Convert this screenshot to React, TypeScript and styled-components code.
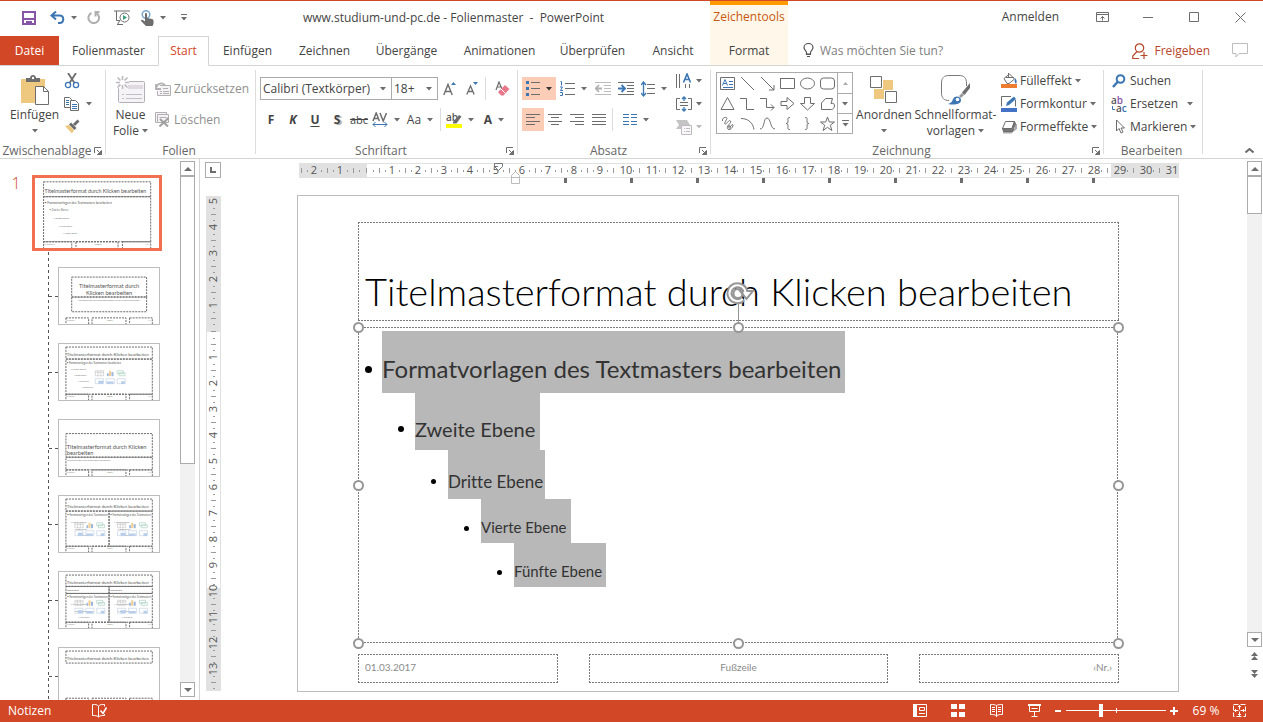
import React from 'react';
import styled, { createGlobalStyle, css } from 'styled-components';

const c = {
  brand: '#d24726',
  text: '#444444',
  muted: '#666666',
  line: '#d4d4d4',
  edge: '#ababab',
  blue: '#3b76b3',
  sand: '#edc87e',
  pick: '#fbcdb6',
  icon: '#6d6d6d',
};

const Global = createGlobalStyle`
  * { box-sizing: border-box; }
  body { margin: 0; background: #fff; overflow: hidden; }
  body, button, input, select { font: 12px/16px "Open Sans", "Noto Sans", sans-serif; color: ${c.text}; }
  button { background: none; border: 0; padding: 0; }
  svg { display: block; flex: none; }
`;

const Shell = styled.div`
  display: flex;
  flex-direction: column;
  height: 100vh;
  border-top: 1px solid ${c.brand};
`;

/* ---------- header ---------- */
const Header = styled.header`
  display: grid;
  grid-template-columns: 710px 78px 1fr;
  grid-template-rows: 35px 30px;
`;
const QuickRow = styled.div`
  display: flex;
  align-items: center;
  padding: 0 0 2px 10px;
`;
const Quick = styled.button<{ $w: number }>`
  display: flex;
  align-items: center;
  justify-content: center;
  gap: 6px;
  width: ${p => p.$w}px;
  height: 28px;
`;
const Title = styled.h1`
  flex: 1;
  margin: 0;
  font: inherit;
  text-align: center;
`;
const Context = styled.div`
  grid-row: 1 / span 2;
  grid-column: 2;
  display: flex;
  flex-direction: column;
  background: #fff7ea;
  border-top: 4px solid #ff9a00;
  border-bottom: 1px solid ${c.line};
`;
const ContextName = styled.div`
  height: 31px;
  padding-top: 4px;
  text-align: center;
  color: #c8590f;
`;
const FormatTab = styled.button`
  flex: 1;
`;
const WindowRow = styled.div`
  display: flex;
  align-items: center;
  justify-content: flex-end;
  padding-bottom: 3px;
`;
const SignIn = styled.button`
  margin-right: 20px;
`;
const WinButton = styled.button`
  display: flex;
  align-items: center;
  justify-content: center;
  width: 46px;
  height: 30px;
`;
const Tabs = styled.nav`
  grid-row: 2;
  grid-column: 1;
  display: flex;
`;
const Tab = styled.button<{ $w: number; $kind?: 'file' | 'active' }>`
  width: ${p => p.$w}px;
  border-bottom: 1px solid ${c.line};
  ${p => p.$kind === 'file' && css`background: ${c.brand}; color: #fff;`}
  ${p => p.$kind === 'active' && css`
    color: ${c.brand};
    border: 1px solid ${c.line};
    border-bottom-color: #fff;
  `}
`;
const TellRow = styled.div`
  grid-row: 2;
  grid-column: 3;
  display: flex;
  align-items: center;
  padding: 0 15px;
  border-bottom: 1px solid ${c.line};
`;
const Tell = styled.label`
  display: flex;
  align-items: center;
  flex: 1;
  gap: 6px;
`;
const TellInput = styled.input`
  flex: 1;
  min-width: 0;
  border: 0;
  padding: 0;
  outline: 0;
  &::placeholder { color: #808080; opacity: 1; }
`;
const Share = styled.button`
  display: flex;
  align-items: center;
  gap: 6px;
  margin-right: 22px;
  color: #b7472a;
`;

/* ---------- ribbon ---------- */
const Ribbon = styled.section`
  display: flex;
  height: 93px;
  flex: none;
  padding-top: 3px;
  border-bottom: 1px solid ${c.line};
`;
const Group = styled.div<{ $w: number }>`
  display: flex;
  flex-direction: column;
  width: ${p => p.$w}px;
`;
const GroupBody = styled.div<{ $pad?: number }>`
  display: flex;
  height: 73px;
  padding-left: ${p => p.$pad ?? 0}px;
`;
const GroupName = styled.div`
  display: flex;
  align-items: center;
  padding: 1px 3px 0 0;
  height: 16px;
  color: ${c.muted};
  > span { flex: 1; text-align: center; white-space: nowrap; }
`;
const Divider = styled.div`
  width: 1px;
  margin: 1px 0 4px;
  background: #dcdcdc;
`;
const Big = styled.button<{ $w: number }>`
  display: flex;
  flex-direction: column;
  align-items: center;
  width: ${p => p.$w}px;
  padding-top: 4px;
  white-space: nowrap;
`;
const BigIcon = styled.span`
  display: flex;
  align-items: center;
  justify-content: center;
  height: 34px;
`;
const Line = styled.span`
  display: flex;
  align-items: center;
  justify-content: center;
  gap: 3px;
  height: 16px;
`;
const Stack = styled.div<{ $pad?: number; $top?: number }>`
  display: flex;
  flex-direction: column;
  align-items: flex-start;
  padding-left: ${p => p.$pad ?? 0}px;
  padding-top: ${p => p.$top ?? 0}px;
`;
const Small = styled.button<{ $h?: number; $gap?: number; $off?: boolean }>`
  display: flex;
  align-items: center;
  gap: ${p => p.$gap ?? 3}px;
  height: ${p => p.$h ?? 23}px;
  white-space: nowrap;
  ${p => p.$off && css`color: #8f8f8f;`}
`;
const Rows = styled.div`
  display: flex;
  flex-direction: column;
  gap: 8px;
  padding-top: 8px;
`;
const Row = styled.div`
  display: flex;
  height: 23px;
`;
const Tool = styled.button<{ $w: number; $on?: boolean }>`
  display: flex;
  align-items: center;
  justify-content: center;
  gap: 6px;
  width: ${p => p.$w}px;
  background: ${p => (p.$on ? c.pick : 'transparent')};
`;
const Glyph = styled.span<{ $kind?: 'b' | 'i' | 'u' | 's' | 'x' }>`
  ${p => p.$kind && p.$kind !== 'x' && css`font-weight: 700;`}
  ${p => p.$kind === 'i' && css`font-style: italic;`}
  ${p => p.$kind === 'u' && css`text-decoration: underline; text-underline-offset: 2px;`}
  ${p => p.$kind === 's' && css`text-shadow: 2px 1px 1px #aaa;`}
  ${p => p.$kind === 'x' && css`font-size: 11px; text-decoration: line-through;`}
`;
const Rule = styled.span`
  width: 1px;
  margin: 0 2px;
  background: #dcdcdc;
`;
const Combo = styled.div<{ $w: number }>`
  position: relative;
  width: ${p => p.$w}px;
  height: 23px;
  margin-right: -1px;
  border: 1px solid ${c.edge};
  > svg { position: absolute; right: 5px; top: 9px; pointer-events: none; }
`;
const Select = styled.select`
  appearance: none;
  width: 100%;
  height: 21px;
  padding: 0 2px;
  border: 0;
  background: #fff;
`;
const Gallery = styled.div`
  display: grid;
  grid-template-columns: repeat(6, 20px) 15px;
  grid-template-rows: repeat(3, 20px);
  height: 62px;
  margin: 3px 3px 0 0;
  border: 1px solid ${c.edge};
`;
const Cell = styled.button`
  display: flex;
  align-items: center;
  justify-content: center;
`;
const GalleryStep = styled(Cell)<{ $n: number }>`
  grid-column: 7;
  grid-row: ${p => p.$n};
  border-left: 1px solid ${c.edge};
  ${p => p.$n > 1 && css`border-top: 1px solid ${c.edge};`}
`;
const Collapse = styled.button`
  margin: 0 9px 5px auto;
  align-self: flex-end;
`;
const ReplaceSvg = styled.svg`
  overflow: visible;
  font: 600 10px "Open Sans", sans-serif;
`;
const CaretSlot = styled.span`
  padding-left: 6px;
`;

/* ---------- work area ---------- */
const Work = styled.main`
  flex: 1;
  min-height: 0;
  display: flex;
  padding-right: 1px;
`;
const Panel = styled.aside`
  display: grid;
  grid-template-columns: 32px 1fr;
  width: 180px;
  padding-top: 16px;
  overflow: hidden;
`;
const Num = styled.div`
  text-align: center;
  font: 300 16px/16px "Open Sans", sans-serif;
  color: ${c.brand};
`;
const Thumbs = styled.div`
  display: flex;
  flex-direction: column;
`;
const Master = styled.button`
  width: 130px;
  height: 76px;
  flex: none;
  border: 3px solid #f07050;
`;
const Branch = styled.ul`
  flex: none;
  margin: 1px 0 0 16px;
  padding: 0;
  list-style: none;
  background: repeating-linear-gradient(180deg, #555 0 3px, transparent 3px 6px) left / 1px 100% no-repeat;
`;
const Leaf = styled.li`
  display: flex;
  align-items: center;
  height: 76px;
  padding: 15px 0 3px 1px;
`;
const Stub = styled.i`
  width: 9px;
  height: 1px;
  background: repeating-linear-gradient(90deg, #555 0 3px, transparent 3px 6px);
`;
const Layout = styled.button`
  width: 102px;
  height: 58px;
  border: 1px solid #bdbdbd;
`;
const Scroll = styled.div<{ $bottom: number }>`
  display: flex;
  flex-direction: column;
  width: 15px;
  margin: 2px 0 ${p => p.$bottom}px;
  flex: none;
`;
const ScrollButton = styled.button<{ $plain?: boolean }>`
  display: flex;
  align-items: center;
  justify-content: center;
  height: ${p => (p.$plain ? 18 : 15)}px;
  border: ${p => (p.$plain ? '0' : `1px solid ${c.edge}`)};
`;
const Track = styled.div`
  flex: 1;
  background: #f1f1f1;
`;
const Grip = styled.div<{ $h: string }>`
  height: ${p => p.$h};
  background: #fff;
  border: 1px solid ${c.edge};
`;
const Editor = styled.section`
  flex: 1;
  min-width: 0;
  display: grid;
  grid-template-columns: 24px 1fr;
  grid-template-rows: 36px 1fr;
  margin-left: 4px;
  border-left: 1px solid ${c.line};
`;
const TabPick = styled.button`
  display: flex;
  align-items: center;
  justify-content: center;
  width: 16px;
  height: 16px;
  margin: 3px 0 0 5px;
  border: 1px solid ${c.edge};
`;
const HRulerBox = styled.div`
  display: flex;
  justify-content: center;
  padding: 4px 0 0 7px;
`;
const VRulerBox = styled.div`
  padding: 1px 0 0 6px;
`;
const Canvas = styled.div`
  display: flex;
  justify-content: center;
  align-items: flex-start;
  padding-left: 5px;
`;
const RulerText = styled.text`
  font: 11px "Open Sans", sans-serif;
  fill: #555;
  stroke: none;
  text-anchor: middle;
`;
const Slide = styled.article`
  position: relative;
  width: 882px;
  height: 497px;
  flex: none;
  border: 1px solid #bdbdbd;
  font-family: Lato, "Open Sans", sans-serif;
  font-variant-ligatures: none;
`;
const dash = (deg: number) => `repeating-linear-gradient(${deg}deg, #7a7a7a 0 2px, transparent 2px 3px)`;
const Holder = styled.div<{ $x: number; $y: number; $w: number; $h: number }>`
  position: absolute;
  left: ${p => p.$x}px;
  top: ${p => p.$y}px;
  width: ${p => p.$w}px;
  height: ${p => p.$h}px;
  background:
    ${dash(90)} top / 100% 1px no-repeat,
    ${dash(90)} bottom / 100% 1px no-repeat,
    ${dash(180)} left / 1px 100% no-repeat,
    ${dash(180)} right / 1px 100% no-repeat;
`;
const TitleText = styled.h2`
  margin: 0;
  padding: 46px 0 0 7px;
  font-weight: 300;
  font-size: 38px;
  line-height: 46px;
  color: #000;
  white-space: nowrap;
`;
const Levels = styled.ul`
  margin: 0;
  padding: 4px 0 0 7px;
  list-style: none;
`;
const Level = styled.li<{ $n: number; $h: number; $size: number }>`
  display: flex;
  align-items: center;
  height: ${p => p.$h}px;
  margin-left: ${p => p.$n * 33}px;
  font-size: ${p => p.$size}px;
  color: #333;
`;
const Bullet = styled.i<{ $d: number }>`
  width: 17px;
  padding-top: 14px;
  &::before {
    content: '';
    display: block;
    width: ${p => p.$d}px;
    height: ${p => p.$d}px;
    border-radius: 50%;
    background: #000;
  }
`;
const Mark = styled.span<{ $top: number; $w: number }>`
  width: ${p => p.$w}px;
  height: 100%;
  padding-top: ${p => p.$top}px;
  line-height: 30px;
  white-space: nowrap;
  background: #b8b8b8;
`;
const Foot = styled.div<{ $align: 'left' | 'center' | 'right' }>`
  padding: 5px 7px;
  font-size: 10px;
  line-height: 16px;
  color: #8b8b8b;
  text-align: ${p => p.$align};
`;
const Handle = styled.i<{ $x: number; $y: number }>`
  position: absolute;
  left: ${p => p.$x}%;
  top: ${p => p.$y}%;
  width: 11px;
  height: 11px;
  margin: -5px;
  border: 2px solid #969696;
  border-radius: 50%;
  background: #fff;
`;
const Spin = styled.div`
  position: absolute;
  left: 50%;
  top: -46px;
  margin-left: -13px;
`;

/* ---------- status bar ---------- */
const Status = styled.footer`
  display: flex;
  align-items: center;
  height: 22px;
  flex: none;
  padding: 0 17px 1px 8px;
  background: ${c.brand};
  color: #fff;
`;
const StatusButton = styled.button<{ $w?: number }>`
  display: flex;
  justify-content: center;
  width: ${p => (p.$w ? `${p.$w}px` : 'auto')};
  color: #fff;
`;
const Fill = styled.span`
  flex: 1;
`;
const Zoom = styled.input`
  appearance: none;
  width: 100px;
  height: 13px;
  margin: 0 3px;
  background:
    linear-gradient(#fff, #fff) center / 100% 1px no-repeat,
    linear-gradient(#fff, #fff) center / 1px 5px no-repeat;
  &::-webkit-slider-thumb {
    appearance: none;
    width: 4px;
    height: 13px;
    background: #fff;
  }
`;

/* ---------- drawings ---------- */
type P = { w: number; h: number; children: React.ReactNode; s?: string; sw?: number };
const I = ({ w, h, children, s = c.icon, sw = 1 }: P) => (
  <svg width={w} height={h} viewBox={`0 0 ${w} ${h}`} fill="none" stroke={s} strokeWidth={sw} aria-hidden="true">{children}</svg>
);
const Caret = ({ color = '#6d6d6d' }: { color?: string }) => (
  <svg width="6" height="4" viewBox="0 0 6 4" fill={color} aria-hidden="true"><path d="M0 0h6L3 3.5z" /></svg>
);
const UpCaret = ({ color = '#6d6d6d' }: { color?: string }) => (
  <svg width="8" height="4" viewBox="0 0 8 4" fill={color} aria-hidden="true"><path d="M0 4h8L4 0z" /></svg>
);
const DownCaret = () => (
  <svg width="8" height="4" viewBox="0 0 8 4" fill="#6d6d6d" aria-hidden="true"><path d="M0 0h8L4 4z" /></svg>
);
const Launcher = () => (
  <I w={8} h={8}><path d="M.5 6V.5H7M3 3l3.5 3.500M7.500 3.500v4h-4z" /><path d="M7.500 4v3.500H4z" fill={c.icon} /></I>
);
const hl = (x: number, w: number, ys: number[]) => ys.map(y => `M${x} ${y}h${w}`).join('');

const levels = [
  { t: 'Formatvorlagen des Textmasters bearbeiten', h: 62, size: 24, w: 463, d: 7, top: 23 },
  { t: 'Zweite Ebene', h: 57, size: 20, w: 125, d: 6, top: 21 },
  { t: 'Dritte Ebene', h: 49, size: 17, w: 97, d: 5, top: 17 },
  { t: 'Vierte Ebene', h: 44, size: 15, w: 90, d: 5, top: 13 },
  { t: 'Fünfte Ebene', h: 44, size: 15, w: 92, d: 5, top: 13 },
];

const HRuler = () => {
  const marks: React.ReactNode[] = [];
  for (let i = -2; i <= 31; i++) {
    const x = 67 + i * 26;
    if (i !== 0) marks.push(<RulerText key={`n${i}`} x={x} y={11}>{Math.abs(i)}</RulerText>);
    else marks.push(<path key="z" d={`M${x + 0.5} 5v5`} />);
    marks.push(<path key={`t${i}`} d={`M${x - 12.5} 5v5${Math.abs(i) < 10 ? `M${x - 6.5} 7v2` : ''}M${x - 18.5} 7v2`} />);
  }
  return (
    <svg width="880" height="21" viewBox="0 0 880 21" stroke="none" aria-label="Lineal">
      <path d="M0 0h68v15H0zM812 0h68v15h-68z" fill="#e1e1e1" />
      <path d="M68 .5h744M68 14.500h744" stroke="#e1e1e1" />
      <g stroke="#9a9a9a">{marks}</g>
      <path d={Array.from({ length: 9 }, (_, i) => `M${265 + i * 66} 15h3v5h-3z`).join('')} fill="#6d6d6d" />
      <path d="M195.500 .5h8v3l-4 4-4-4z" fill="none" stroke="#777" />
      <path d="M212.500 20.500v-8l4-4 4 4v8zM212.500 14.500h8" fill="#fff" stroke="#bbb" />
    </svg>
  );
};
const VRuler = () => {
  const marks: React.ReactNode[] = [];
  for (let i = -5; i <= 13; i++) {
    const y = 135 + i * 26;
    if (i !== 0) marks.push(<RulerText key={`n${i}`} x={0} y={4} transform={`translate(7 ${y}) rotate(-90)`}>{Math.abs(i)}</RulerText>);
    else marks.push(<path key="z" d={`M5 ${y + 0.5}h5`} />);
    marks.push(<path key={`t${i}`} d={`M5 ${y + 13.5}h5M7 ${y + 7.5}h2M7 ${y + 19.5}h2`} />);
  }
  return (
    <svg width="15" height="495" viewBox="0 0 15 495" stroke="none" aria-label="Lineal">
      <path d="M0 0h15v136H0zM0 392h15v103H0z" fill="#e1e1e1" />
      <path d="M.5 136v256M14.500 136v256" stroke="#e1e1e1" />
      <g stroke="#9a9a9a">{marks}</g>
    </svg>
  );
};

const MiniText = styled.text<{ $s: number; $light?: boolean }>`
  font: ${p => p.$s}px Lato, sans-serif;
  fill: ${p => (p.$light ? '#777' : '#555')};
`;
const Box = ({ x, y, w, h }: { x: number; y: number; w: number; h: number }) => (
  <rect x={x} y={y} width={w} height={h} fill="none" stroke="#6a6a6a" strokeDasharray="2 1" vectorEffect="non-scaling-stroke" />
);
const Feet = ({ y }: { y: number }) => (
  <>
    <Box x={61} y={y} w={200} h={60} />
    <Box x={291} y={y} w={299} h={60} />
    <Box x={622} y={y} w={200} h={60} />
    <MiniText $s={14} $light x={68} y={y + 26}>01.03.2017</MiniText>
    <MiniText $s={14} $light x={422} y={y + 26}>Fußzeile</MiniText>
    <MiniText $s={14} $light x={785} y={y + 26}>‹Nr.›</MiniText>
  </>
);
const MiniLevels = ({ x, y, n = 5, step = 60 }: { x: number; y: number; n?: number; step?: number }) => (
  <>
    {levels.slice(0, n).map((l, i) => (
      <MiniText key={i} $s={l.size} $light={i > 0} x={x + i * 33} y={y + i * step}>{`• ${n < 5 ? l.t.replace(' bearbeiten', '') : l.t}`}</MiniText>
    ))}
  </>
);
const Picks = ({ x, y }: { x: number; y: number }) => (
  <g transform={`translate(${x} ${y})`} fill="none" strokeWidth="6">
    <path d="M4 4h72v44H4zM4 18h72M28 4v44M52 4v44" stroke="#c9c9c9" />
    <path d="M106 26h16v26h-16z" fill="#9db7dc" /><path d="M124 4h18v48h-18z" fill="#f2cf92" /><path d="M146 16h18v36h-18z" fill="#9db7dc" />
    <path d="M196 4h54v26h-54zM212 22h54v26h-54z" stroke="#a9d0c0" />
    <path d="M4 74h72v44H4zM196 74h72v44h-72zM100 74h72v44h-72z" stroke="#c3d3e6" />
    <path d="M30 92h44v26H30zM104 98h60v20h-60zM232 96h32v24h-32z" fill="#b7cdea" />
  </g>
);
const Mini = ({ kind, w, h }: { kind: number; w: number; h: number }) => {
  const T = <MiniText $s={38} x={68} y={109}>Titelmasterformat durch Klicken bearbeiten</MiniText>;
  return (
    <svg width={w} height={h} viewBox="0 0 881 494" preserveAspectRatio="none" aria-hidden="true">
      {kind === 0 && <><Box x={61} y={27} w={761} h={105} />{T}<Box x={61} y={132} w={761} h={318} /><MiniLevels x={68} y={182} step={54} /><Feet y={450} /></>}
      {kind === 1 && (
        <>
          <Box x={112} y={80} w={660} h={176} />
          <MiniText $s={50} x={441} y={176} textAnchor="middle">Titelmasterformat durch</MiniText>
          <MiniText $s={50} x={441} y={234} textAnchor="middle">Klicken bearbeiten</MiniText>
          <Box x={112} y={256} w={660} h={130} />
          <MiniText $s={20} $light x={441} y={294} textAnchor="middle">Formatvorlage des Untertitelmasters durch Klicken bearbeiten</MiniText>
          <Feet y={440} />
        </>
      )}
      {kind === 2 && <><Box x={61} y={27} w={761} h={106} />{T}<Box x={61} y={133} w={761} h={310} /><MiniLevels x={68} y={176} step={54} /><Picks x={316} y={232} /><Feet y={443} /></>}
      {kind === 3 && (
        <>
          <Box x={61} y={120} w={761} h={208} />
          <MiniText $s={50} x={68} y={254}>Titelmasterformat durch Klicken</MiniText>
          <MiniText $s={50} x={68} y={312}>bearbeiten</MiniText>
          <Box x={61} y={328} w={761} h={112} />
          <MiniText $s={20} $light x={72} y={364}>Formatvorlagen des Textmasters bearbeiten</MiniText>
          <Feet y={440} />
        </>
      )}
      {kind === 4 && (
        <>
          <Box x={61} y={27} w={761} h={106} />{T}
          <Box x={61} y={133} w={380} h={310} /><Box x={441} y={133} w={381} h={310} />
          <MiniLevels x={72} y={176} n={4} /><MiniLevels x={452} y={176} n={4} />
          <Picks x={136} y={232} /><Picks x={512} y={232} /><Feet y={443} />
        </>
      )}
      {kind === 5 && (
        <>
          <Box x={61} y={27} w={761} h={100} />{T}
          <Box x={61} y={127} w={380} h={62} /><Box x={441} y={127} w={381} h={62} />
          <MiniText $s={22} x={72} y={164}>bearbeiten</MiniText><MiniText $s={22} x={452} y={164}>bearbeiten</MiniText>
          <Box x={61} y={189} w={380} h={254} /><Box x={441} y={189} w={381} h={254} />
          <MiniLevels x={72} y={230} n={4} /><MiniLevels x={452} y={230} n={4} />
          <Picks x={136} y={246} /><Picks x={512} y={246} /><Feet y={443} />
        </>
      )}
      {kind === 6 && <><Box x={61} y={27} w={761} h={106} />{T}<Feet y={443} /></>}
    </svg>
  );
};

const shapes: React.ReactNode[] = [
  <><path d="M.5 1.500h14v12H.5z" /><path d="M9 5.500h4M9 8.500h4M3 11.500h10" stroke={c.blue} /><path d="M2.500 9.500l2.500-6 2.500 6M3.500 7.500h3" stroke={c.blue} /></>,
  <path d="M1 1l13 13" />,
  <path d="M1 1l13 13M14 9v5H9" />,
  <path d="M0 2.500h14.500v10H0.500v-10" />,
  <ellipse cx="7.500" cy="7.500" rx="7" ry="5.500" />,
  <rect x=".5" y="2" width="14" height="11" rx="3" />,
  <path d="M1 13.500L7.500 1.500l6.500 12z" />,
  <path d="M0 2.500h6.500v11H14" />,
  <path d="M0 2.500h6.500v9H14M11 8.500l3 3-3 3" />,
  <path d="M1 5.500h6V1.500l7 6-7 6v-4H1z" />,
  <path d="M4.500 1.500h6v6h4l-7 6.500-7-6.500h4z" />,
  <path d="M5.500 2.500h7l-1.500 5c3-1 3.500 1 3.500 2.500-.5 2-1.500 3.500-3 3.500H1.500V7z" />,
  <path d="M2.500 5c-1-4 6-5 4-1.500S4 8 5.500 8 9 3 10.500 5 6 10 8 11s5-4 5-2-3 6-5 4 1-4 2-3-1 4-1 4" />,
  <path d="M1 2.500c8 0 12 5 13 11" />,
  <path d="M0 13c5 0 3-11 7-11s3 11 8 11" />,
  <path d="M10 1.500C7 1.500 8 3 8 5s-.5 2.500-2 2.500C7.500 7.500 8 8 8 10s-1 3.500 2 3.500" />,
  <path d="M5 1.500c3 0 2 1.500 2 3.500s.5 2.500 2 2.500C7.500 7.500 7 8 7 10s1 3.500-2 3.500" />,
  <path d="M7.500 1l1.800 5h5.200l-4.200 3.200 1.600 5.300-4.400-3.200-4.400 3.200 1.600-5.300L.5 6h5.200z" />,
];

const tabs: [string, number, ('file' | 'active')?][] = [
  ['Datei', 59, 'file'], ['Folienmaster', 99], ['Start', 51, 'active'], ['Einfügen', 77], ['Zeichnen', 77],
  ['Übergänge', 87], ['Animationen', 99], ['Überprüfen', 87], ['Ansicht', 74],
];

const corners = [[0, 0], [50, 0], [100, 0], [0, 50], [100, 50], [0, 100], [50, 100], [100, 100]];

export default function App() {
  return (
    <Shell>
      <Global />
      <Header>
        <QuickRow>
          <Quick $w={38} aria-label="Speichern">
            <I w={14} h={14} s="#8655a5" sw={2}><path d="M1 1h12v12H1z" /><path d="M1 8h12" /><path d="M5 14v-3h4v3" /></I>
          </Quick>
          <Quick $w={30} aria-label="Rückgängig">
            <I w={15} h={13} s={c.blue} sw={2}><path d="M6 .5L1.500 4.500 6 8.500M2 4.500h7.500c5 0 5 7.500 0 7.500H8" /></I><Caret />
          </Quick>
          <Quick $w={30} aria-label="Wiederholen">
            <I w={13} h={13} s="#b0b0b0" sw={2}><path d="M4.500 2a5.300 5.300 0 1 0 4.500 0" /><path d="M12.500 1H8.500v4.500" /></I>
          </Quick>
          <Quick $w={28} aria-label="Präsentation starten">
            <I w={16} h={15}><path d="M0 1h16M2.500 1v9.500H6M6 10l-2.500 4.500M3 14.500h6" /><circle cx="10.500" cy="7.500" r="4.500" fill="#fff" /><path d="M9 5l4 2.500L9 10z" fill="#3f9c76" stroke="none" /></I>
          </Quick>
          <Quick $w={35} aria-label="Touch-/Mausmodus">
            <svg width="13" height="16" viewBox="0 0 13 16" aria-hidden="true">
              <circle cx="5" cy="4.500" r="3.800" fill="none" stroke="#7ba7d0" strokeWidth="1.500" />
              <path d="M4 4c0-1.500 2-1.500 2 0v4l5 1c1 0 1.500 1 1.500 2v3l-1 2H5L0 11c0-1.500 1.500-1.500 2.500-.5L4 11.500z" fill="#6d6d6d" />
            </svg>
            <Caret />
          </Quick>
          <Quick $w={26} aria-label="Symbolleiste anpassen">
            <I w={6} h={7}><path d="M0 .5h6" /><path d="M0 3h6L3 6.500z" fill={c.icon} stroke="none" /></I>
          </Quick>
          <Title>www.studium-und-pc.de - Folienmaster&nbsp; -&nbsp; PowerPoint</Title>
        </QuickRow>
        <Context>
          <ContextName>Zeichentools</ContextName>
          <FormatTab>Format</FormatTab>
        </Context>
        <WindowRow>
          <SignIn>Anmelden</SignIn>
          <WinButton aria-label="Menüband-Anzeigeoptionen"><I w={13} h={10}><path d="M.5 .5h12v9H.5zM.5 2.500h12M6.500 8.500v-4M4.500 6.500l2-2 2 2" /></I></WinButton>
          <WinButton aria-label="Minimieren"><I w={10} h={10}><path d="M0 5.500h10" /></I></WinButton>
          <WinButton aria-label="Maximieren"><I w={10} h={10}><path d="M.5 .5h9v9h-9z" /></I></WinButton>
          <WinButton aria-label="Schließen"><I w={11} h={11}><path d="M.5 .5l10 10M10.500 .5l-10 10" /></I></WinButton>
        </WindowRow>
        <Tabs>{tabs.map(([t, w, k]) => <Tab key={t} $w={w} $kind={k}>{t}</Tab>)}</Tabs>
        <TellRow>
          <Tell>
            <I w={11} h={15} s="#555"><path d="M3.500 9.500C3.500 8 1 7 1 4.500a4.500 4 0 0 1 9 0C10 7 7.500 8 7.500 9.500v2h-4zM3.500 11h4M4 13.500h3" strokeWidth="1.200" /></I>
            <TellInput aria-label="Was möchten Sie tun?" placeholder="Was möchten Sie tun?" />
          </Tell>
          <Share>
            <I w={16} h={16} s="#b7472a" sw={1.2}><circle cx="7.500" cy="5" r="4.200" /><path d="M5 8.500L.8 13v2.500H7M12 9v7M8.500 12.500h7" /></I>
            Freigeben
          </Share>
          <button aria-label="Kommentare"><I w={16} h={15} s="#bdbdbd"><path d="M.5 .5h15v10H7l-3 3.500v-3.500H.5z" /></I></button>
        </TellRow>
      </Header>

      <Ribbon>
        <Group $w={105}>
          <GroupBody $pad={6}>
            <Big $w={57}>
              <BigIcon>
                <svg width="28" height="31" viewBox="0 0 28 31" aria-hidden="true">
                  <path d="M0 4h24v24H0z" fill={c.sand} />
                  <path d="M5 7V3h4c0-4 6-4 6 0h4v4z" fill="#6d6d6d" /><circle cx="12" cy="3" r="1.200" fill="#fff" />
                  <path d="M14.500 11.500h8l5 5v13h-13z" fill="#fff" stroke="#6d6d6d" /><path d="M22.500 11.500v5h5" fill="none" stroke="#6d6d6d" />
                </svg>
              </BigIcon>
              <Line>Einfügen</Line>
              <Line><Caret /></Line>
            </Big>
            <Stack $pad={1}>
              <Small aria-label="Ausschneiden">
                <I w={16} h={16}><path d="M4 0l6.500 10M12 0L5.500 10" strokeWidth="1.800" /><circle cx="4" cy="12" r="2.600" stroke={c.blue} strokeWidth="1.300" /><circle cx="12" cy="12" r="2.600" stroke={c.blue} strokeWidth="1.300" /></I>
              </Small>
              <Small $gap={6} aria-label="Kopieren">
                <I w={16} h={14}><path d="M.5 .5h5l2 2v8h-7z" fill="#fff" /><path d="M6.500 3.500h5l3 3v7h-8z" fill="#fff" /><path d="M2 3.500h3M2 5.500h3M2 7.500h3M8 7.500h5M8 9.500h5M8 11.500h5" stroke={c.blue} /></I><Caret />
              </Small>
              <Small aria-label="Format übertragen">
                <svg width="16" height="15" viewBox="0 0 16 15" aria-hidden="true">
                  <path d="M1 7l4-1 5 5-2 3.500z" fill={c.sand} />
                  <path d="M5 5.500l2-2 5.500 5.500-2 2z" fill="#6d6d6d" />
                  <path d="M9 5l4.500-4.500 2 2L11 7z" fill="#6d6d6d" />
                </svg>
              </Small>
            </Stack>
          </GroupBody>
          <GroupName><span>Zwischenablage</span><button aria-label="Zwischenablage öffnen"><Launcher /></button></GroupName>
        </Group>
        <Divider />
        <Group $w={149}>
          <GroupBody>
            <Big $w={49}>
              <BigIcon>
                <svg width="30" height="29" viewBox="0 0 30 29" fill="none" aria-hidden="true">
                  <rect x="2.500" y="5.500" width="26" height="21" rx="1" fill="#f6f3f7" stroke="#b5b0b8" />
                  <path d="M12 9h15v4H12z" fill="#dedae0" /><path d="M6 18.500h2M10 18.500h16M6 22.500h2M10 22.500h16" stroke="#c3bfc6" />
                  <path d="M6 0v13M0 6.500h13M1.500 2l9.500 9.500M11 2L1.500 11.500" stroke="#fff" strokeWidth="3" />
                  <path d="M6.500 0v4M6.500 9v4M0 6.500h4M9 6.500h4M1.500 1.500l3 3M8.500 8.500l3 3M11.500 1.500l-3 3M4.500 8.500l-3 3" stroke="#bdb8bf" strokeWidth="1.600" />
                </svg>
              </BigIcon>
              <Line>Neue</Line>
              <Line>Folie<Caret /></Line>
            </Big>
            <Stack $top={4}>
              <Small $h={31} $off>
                <I w={16} h={14} s="#b0b0b0"><path d="M5 3.500h10.500v10H2.500V9" fill="#f5f3f5" /><path d="M8 6.500h5M5 9.500h2M8 9.500h6M5 11.500h2M8 11.500h6" /><path d="M1 2v5h5M1 6.500C2 1 8 0 10 3.500" strokeWidth="1.800" /></I>
                Zurücksetzen
              </Small>
              <Small $h={31} $off>
                <I w={16} h={15} s="#b0b0b0"><path d="M2 10.500H.5V.5h11V2M2.500 2.500h11v8h-11z" fill="#f5f3f5" /><path d="M4.500 5.500h7" /><path d="M5 7l8 7.500M13.500 6L4.500 14.500" stroke="#a0a0a0" strokeWidth="2" /></I>
                Löschen
              </Small>
            </Stack>
          </GroupBody>
          <GroupName><span>Folien</span></GroupName>
        </Group>
        <Divider />
        <Group $w={261}>
          <GroupBody $pad={4}>
            <Rows>
              <Row>
                <Combo $w={132}>
                  <Select aria-label="Schriftart"><option>Calibri (Textkörper)</option></Select><Caret />
                </Combo>
                <Combo $w={47}>
                  <Select aria-label="Schriftgrad"><option>18+</option></Select><Caret />
                </Combo>
                <Tool $w={24} aria-label="Schriftgrad vergrößern"><I w={13} h={14}><path d="M.8 13L5 2.500 9.200 13M2.300 9.500h5.500" strokeWidth="1.400" /><path d="M8 3h5l-2.500-3z" fill={c.blue} stroke="none" /></I></Tool>
                <Tool $w={22} aria-label="Schriftgrad verkleinern"><I w={12} h={13}><path d="M.8 12.500L4.500 4l3.700 8.500M2.200 9.500h4.600" strokeWidth="1.300" /><path d="M7 0h5L9.500 3z" fill={c.blue} stroke="none" /></I></Tool>
                <Rule />
                <Tool $w={28} aria-label="Formatierung löschen">
                  <I w={15} h={15}><path d="M1 9L4 1l3 7M2 6h4" strokeWidth="1.200" /><path d="M3 11l7-7 4.500 4-6 6.500H6z" fill="#e8798c" stroke="none" /><path d="M6 8l4.500 4.500" stroke="#fff" /></I>
                </Tool>
              </Row>
              <Row>
                <Tool $w={22}><Glyph $kind="b">F</Glyph></Tool>
                <Tool $w={22}><Glyph $kind="i">K</Glyph></Tool>
                <Tool $w={22}><Glyph $kind="u">U</Glyph></Tool>
                <Tool $w={22}><Glyph $kind="s">S</Glyph></Tool>
                <Tool $w={22}><Glyph $kind="x">abc</Glyph></Tool>
                <Tool $w={32} aria-label="Zeichenabstand">
                  <I w={16} h={15}><path d="M1 9L4.200 1l3.200 8M2.300 6.500h3.800M8 1l3.200 8L14.500 1" strokeWidth="1.500" /><path d="M1 12.500h14M3.500 10L1 12.500 3.500 15M12.500 10l2.500 2.500-2.500 2.500" stroke={c.blue} /></I><Caret />
                </Tool>
                <Tool $w={36}><Glyph>Aa</Glyph><Caret /></Tool>
                <Rule />
                <Tool $w={34} aria-label="Texthervorhebungsfarbe">
                  <ReplaceSvg width="16" height="17" viewBox="0 0 16 17" aria-hidden="true">
                    <path d="M0 13h16v4H0z" fill="#ffff00" />
                    <text x="0" y="10" fill="#555">ab</text>
                    <path d="M7 11l6-7 2.500 1.500-5 7H7z" fill="#6d6d6d" />
                  </ReplaceSvg>
                  <Caret />
                </Tool>
                <Tool $w={34}><Glyph $kind="b">A</Glyph><Caret /></Tool>
              </Row>
            </Rows>
          </GroupBody>
          <GroupName><span>Schriftart</span><button aria-label="Schriftart öffnen"><Launcher /></button></GroupName>
        </Group>
        <Divider />
        <Group $w={192}>
          <GroupBody $pad={4}>
            <Rows>
              <Row>
                <Tool $w={34} $on aria-label="Aufzählungszeichen">
                  <I w={14} h={15}><path d={hl(5, 9, [1.5, 7.5, 13.5])} /><path d="M0 0h3v3H0zM0 6h3v3H0zM0 12h3v3H0z" fill={c.blue} stroke="none" /></I><Caret color="#333" />
                </Tool>
                <Tool $w={34} aria-label="Nummerierung">
                  <I w={15} h={15}><path d={hl(5, 10, [2.5, 7.5, 13.5])} /><path d="M.5 .5h1v4M0 6h2.500L.5 9.500h2.500M0 11.500h2.500v3H0" stroke={c.blue} /></I><Caret />
                </Tool>
                <Tool $w={26} aria-label="Einzug verkleinern">
                  <I w={16} h={13} s="#bcbcbc"><path d={hl(0, 16, [0.5, 12.5]) + hl(9, 7, [3.5, 6.5, 9.5])} /><path d="M7 6.500H1M4 3L.8 6.500 4 10" strokeWidth="1.800" stroke="#b0b0b0" /></I>
                </Tool>
                <Tool $w={20} aria-label="Einzug vergrößern">
                  <I w={16} h={13}><path d={hl(0, 16, [0.5, 12.5]) + hl(9, 7, [3.5, 6.5, 9.5])} /><path d="M0 6.500h6M3.500 3L7 6.500 3.500 10" strokeWidth="1.800" stroke={c.blue} /></I>
                </Tool>
                <Tool $w={36} aria-label="Zeilenabstand">
                  <I w={14} h={16}><path d={hl(6, 8, [3.5, 7.5, 12.5])} /><path d="M2.500 1v14M0 4l2.500-3L5 4M0 12l2.500 3L5 12" stroke={c.blue} strokeWidth="1.300" /></I><Caret />
                </Tool>
              </Row>
              <Row>
                <Tool $w={22} $on aria-label="Linksbündig"><I w={14} h={11}><path d="M0 .5h14M0 3.500h9M0 7.500h14M0 10.500h9" /></I></Tool>
                <Tool $w={22} aria-label="Zentriert"><I w={14} h={11}><path d="M0 .5h14M3 3.500h8M0 7.500h14M3 10.500h8" /></I></Tool>
                <Tool $w={22} aria-label="Rechtsbündig"><I w={14} h={11}><path d="M0 .5h14M5 3.500h9M0 7.500h14M5 10.500h9" /></I></Tool>
                <Tool $w={22} aria-label="Blocksatz"><I w={14} h={11}><path d="M0 .5h14M0 3.500h14M0 7.500h14M0 10.500h14" /></I></Tool>
                <Rule />
                <Tool $w={42} aria-label="Spalten"><I w={14} h={11} s={c.blue}><path d={hl(0, 6, [0.5, 3.5, 7.5, 10.5]) + hl(8, 6, [0.5, 3.5, 7.5, 10.5])} /></I><Caret /></Tool>
              </Row>
            </Rows>
            <Stack $pad={4}>
              <Small $gap={4} aria-label="Textrichtung">
                <I w={16} h={16}><path d="M.5 1v14M3.500 1v14M9.500 11v4M13.500 11v4" /><path d="M7.500 9.500L11 1l3.500 8.500M9 6.500h4" stroke={c.blue} strokeWidth="1.600" /></I><Caret />
              </Small>
              <Small $gap={4} aria-label="Text ausrichten">
                <I w={16} h={16}><path d="M4 2.500H.5v11H4M12 2.500h3.500v11H12M4 6.500h8M4 9.500h8" /><path d="M8 5V1M6 3l2-2 2 2M8 11v4M6 13l2 2 2-2" stroke={c.blue} strokeWidth="1.300" /></I><Caret />
              </Small>
              <Small $gap={4} aria-label="In SmartArt konvertieren">
                <I w={16} h={16} s="#bcbcbc"><path d="M0 1h11l3 5H6v4H0l3-4z" fill="#c4c4c4" stroke="none" /><path d="M5.500 6.500h10v9h-10zM8 9.500h1M8 12.500h1M10 9.500h4M10 12.500h4" fill="#faf7fa" /></I><Caret color="#bcbcbc" />
              </Small>
            </Stack>
          </GroupBody>
          <GroupName><span>Absatz</span><button aria-label="Absatz öffnen"><Launcher /></button></GroupName>
        </Group>
        <Divider />
        <Group $w={392}>
          <GroupBody $pad={5}>
            <Gallery>
              {shapes.map((s, i) => <Cell key={i} aria-label={`Form ${i + 1}`}><I w={15} h={15}>{s}</I></Cell>)}
              <GalleryStep $n={1} aria-label="Nach oben"><svg width="5" height="3" viewBox="0 0 5 3" aria-hidden="true"><path d="M0 3h5L2.500 0z" fill="#aaa" /></svg></GalleryStep>
              <GalleryStep $n={2} aria-label="Nach unten"><Caret /></GalleryStep>
              <GalleryStep $n={3} aria-label="Weitere"><I w={7} h={7}><path d="M0 .5h7" /><path d="M.5 3h6l-3 3.500z" fill={c.icon} stroke="none" /></I></GalleryStep>
            </Gallery>
            <Big $w={56}>
              <BigIcon>
                <svg width="28" height="28" viewBox="0 0 28 28" aria-hidden="true">
                  <path d="M13 4h10v10H13zM4 13h10v10H4z" fill={c.sand} /><path d="M.5 .5h11v11H.5zM15.500 15.500h11v11h-11z" fill="#fff" stroke="#6d6d6d" />
                </svg>
              </BigIcon>
              <Line>Anordnen</Line>
              <Line><Caret /></Line>
            </Big>
            <Big $w={87}>
              <BigIcon>
                <svg width="30" height="31" viewBox="0 0 30 31" fill="none" aria-hidden="true">
                  <path d="M8 25.500C3 25.500.5 23 .5 18V8C.5 3 3 .5 8 .5h10c5 0 7.500 2.500 7.500 7.500v3" stroke="#7a7a7a" />
                  <path d="M7 29c5 1 13 1 13-4 0-4-6-5-8-1-1 3-2 4-5 5z" fill={c.blue} /><circle cx="16.500" cy="24.500" r="1.800" fill="#fff" />
                  <path d="M18 21l3-3 2 2-3 3z" fill="#999" />
                  <path d="M21 17.500L29 8v5l-5.500 7z" fill="#6d6d6d" />
                </svg>
              </BigIcon>
              <Line>Schnellformat-</Line>
              <Line>vorlagen<Caret /></Line>
            </Big>
            <Stack $pad={2}>
              <Small>
                <I w={16} h={16}><path d="M0 11h16v4H0z" fill="#ed7d31" stroke="none" /><path d="M3 5.500L8.500 1l5 5L8 10.500H6zM5 4.500h8M7.500 4V0" fill="#fff" /><path d="M14 5c2 2 2 4 1 6-1-1-2-3-1-6z" fill={c.blue} stroke="none" /></I>
                Fülleffekt<Caret />
              </Small>
              <Small>
                <I w={16} h={16}><path d="M0 12h16v4H0z" fill="#4472c4" stroke="none" /><path d="M10 .5H.5v10M14.500 4v6.500" /><path d="M5 10l1-3.500 7-6L15 3 8 9z" fill={c.blue} stroke="none" /></I>
                Formkontur<Caret />
              </Small>
              <Small>
                <I w={16} h={14}><path d="M2 12.500h8l5-4V4" stroke="#aaa" strokeWidth="2" /><path d="M4.500 1.500h9l-2.500 7H1.500z" fill="#fff" /><path d="M1.500 8.500h9.500l2.500-7 1 2-3 8h-9z" fill="#777" /></I>
                Formeffekte<Caret />
              </Small>
            </Stack>
          </GroupBody>
          <GroupName><span>Zeichnung</span><button aria-label="Zeichnung öffnen"><Launcher /></button></GroupName>
        </Group>
        <Divider />
        <Group $w={98}>
          <GroupBody $pad={8}>
            <Stack>
              <Small>
                <I w={15} h={14} s={c.blue} sw={2}><circle cx="8.500" cy="5" r="3.800" /><path d="M6 7.500L1 13" strokeWidth="2.500" /></I>Suchen
              </Small>
              <Small>
                <ReplaceSvg width="15" height="18" viewBox="0 0 15 18" aria-hidden="true">
                  <text x="-1" y="9" fill="#555">a<tspan fill="#8655a5">b</tspan></text>
                  <text x="4" y="17" fill="#555">a<tspan fill={c.blue}>c</tspan></text>
                  <path d="M.5 11v3.500H3" fill="none" stroke={c.blue} />
                </ReplaceSvg>
                Ersetzen<CaretSlot><Caret /></CaretSlot>
              </Small>
              <Small>
                <I w={15} h={15}><path d="M4.500 1v11L7 9.500l2 4.500 2-1-2-4h3.500z" /></I>Markieren<Caret />
              </Small>
            </Stack>
          </GroupBody>
          <GroupName><span>Bearbeiten</span></GroupName>
        </Group>
        <Divider />
        <Collapse aria-label="Menüband reduzieren"><I w={9} h={5} sw={2}><path d="M.5 4.500l4-3.500 4 3.500" /></I></Collapse>
      </Ribbon>

      <Work>
        <Panel>
          <Num>1</Num>
          <Thumbs>
            <Master aria-label="Folienmaster 1"><Mini kind={0} w={124} h={70} /></Master>
            <Branch>
              {[1, 2, 3, 4, 5, 6].map(k => (
                <Leaf key={k}><Stub /><Layout aria-label={`Layout ${k}`}><Mini kind={k} w={100} h={56} /></Layout></Leaf>
              ))}
            </Branch>
          </Thumbs>
        </Panel>
        <Scroll $bottom={3}>
          <ScrollButton aria-label="Nach oben"><UpCaret /></ScrollButton>
          <Track><Grip $h="57%" /></Track>
          <ScrollButton aria-label="Nach unten"><DownCaret /></ScrollButton>
        </Scroll>
        <Editor>
          <TabPick aria-label="Tabstopp"><I w={6} h={6} sw={2}><path d="M1 0v5h5" /></I></TabPick>
          <HRulerBox><HRuler /></HRulerBox>
          <VRulerBox><VRuler /></VRulerBox>
          <Canvas>
            <Slide>
              <Holder $x={60} $y={26} $w={761} $h={99}>
                <TitleText>Titelmasterformat durch Klicken bearbeiten</TitleText>
              </Holder>
              <Holder $x={60} $y={131} $w={760} $h={316}>
                <Levels>
                  {levels.map((l, i) => (
                    <Level key={l.t} $n={i} $h={l.h} $size={l.size}>
                      <Bullet $d={l.d} /><Mark $w={l.w} $top={l.top}>{l.t}</Mark>
                    </Level>
                  ))}
                </Levels>
                {corners.map(([x, y]) => <Handle key={`${x}-${y}`} $x={x} $y={y} />)}
                <Spin>
                  <svg width="30" height="41" viewBox="0 0 30 41" fill="none" aria-hidden="true">
                    <path d="M13.500 22v19" stroke="#969696" />
                    <path d="M20.500 12a8 8 0 1 0-2.500 6" stroke="#969696" strokeWidth="6" /><path d="M15 10h13l-6.500 8z" fill="#fff" stroke="#969696" strokeWidth="2" />
                    <path d="M20.500 12a8 8 0 1 0-2.500 6" stroke="#fff" strokeWidth="2" /><circle cx="13" cy="12.500" r="4.500" stroke="#969696" strokeWidth="2" />
                  </svg>
                </Spin>
              </Holder>
              <Holder $x={60} $y={458} $w={200} $h={29}><Foot $align="left">01.03.2017</Foot></Holder>
              <Holder $x={291} $y={458} $w={299} $h={29}><Foot $align="center">Fußzeile</Foot></Holder>
              <Holder $x={621} $y={458} $w={200} $h={29}><Foot $align="right">‹Nr.›</Foot></Holder>
            </Slide>
          </Canvas>
        </Editor>
        <Scroll $bottom={17}>
          <ScrollButton aria-label="Nach oben"><UpCaret /></ScrollButton>
          <Track><Grip $h="38px" /></Track>
          <ScrollButton aria-label="Nach unten"><DownCaret /></ScrollButton>
          <ScrollButton $plain aria-label="Vorherige Folie"><I w={7} h={9}><path d="M0 4h7L3.500 0zM0 8h7L3.500 4z" fill={c.icon} stroke="none" /></I></ScrollButton>
          <ScrollButton $plain aria-label="Nächste Folie"><I w={7} h={9}><path d="M0 0h7L3.500 4zM0 4h7L3.500 8z" fill={c.icon} stroke="none" /></I></ScrollButton>
        </Scroll>
      </Work>

      <Status>
        <StatusButton>Notizen</StatusButton>
        <StatusButton $w={97} aria-label="Rechtschreibprüfung">
          <I w={15} h={14} s="#fff"><path d="M6.500 13V2C5 .5 3 .5 .5 .5v11c2.500 0 4.500 0 6 1.500 1.500-1.500 3.500-1.500 6-1.500V10M6.500 2C8 .5 10 .5 12.500 .5v2" /><path d="M8.500 6.500l2.500 3 3.500-6" strokeWidth="1.500" /></I>
        </StatusButton>
        <Fill />
        <StatusButton $w={38} aria-label="Normal"><I w={14} h={13} s="#fff"><path d="M.5 .5h13v12H.5z" /><path d="M0 0h4v13H0z" fill="#fff" stroke="none" /><path d="M6.500 3.500h5v3h-5zM6 9.500h6" /></I></StatusButton>
        <StatusButton $w={38} aria-label="Foliensortierung"><svg width="14" height="13" viewBox="0 0 14 13" fill="#fff" aria-hidden="true"><path d="M0 0h6v5H0zM8 0h6v5H8zM0 8h6v5H0zM8 8h6v5H8z" /></svg></StatusButton>
        <StatusButton $w={38} aria-label="Leseansicht"><I w={13} h={13} s="#fff"><path d="M6.500 13V1.500C5 .5 3 .5 .5 .5v10c2.500 0 4.500 0 6 1.500 1.500-1.500 3.500-1.500 6-1.500V.5c-2.500 0-4.500 0-6 1M2 3.500h3M2 5.500h3M2 7.500h3M8 3.500h3M8 5.500h3M8 7.500h3" /></I></StatusButton>
        <StatusButton $w={38} aria-label="Bildschirmpräsentation"><I w={13} h={13} s="#fff"><path d="M0 1h13" strokeWidth="2" /><path d="M1.500 2v5.500h10V2M3.500 4.500h6M6.500 8v4M3.500 12.500h6" /></I></StatusButton>
        <StatusButton $w={10} aria-label="Verkleinern"><I w={6} h={2} s="#fff" sw={2}><path d="M0 1h6" /></I></StatusButton>
        <Zoom type="range" min={0} max={100} defaultValue={34} aria-label="Zoom" />
        <StatusButton $w={10} aria-label="Vergrößern"><I w={8} h={8} s="#fff" sw={2}><path d="M0 4h8M4 0v8" /></I></StatusButton>
        <StatusButton $w={54}>69 %</StatusButton>
        <StatusButton aria-label="Einpassen"><I w={13} h={13} s="#fff"><path d="M.5 .5h12v12H.5z" strokeDasharray="5 2" /><path d="M6.500 1.500v4M5 3l1.500-1.500L8 3M6.500 7.500v4M5 10l1.500 1.500L8 10M1.500 6.500h4M3 5L1.500 6.500 3 8M7.500 6.500h4M10 5l1.500 1.500L10 8" /></I></StatusButton>
      </Status>
    </Shell>
  );
}
